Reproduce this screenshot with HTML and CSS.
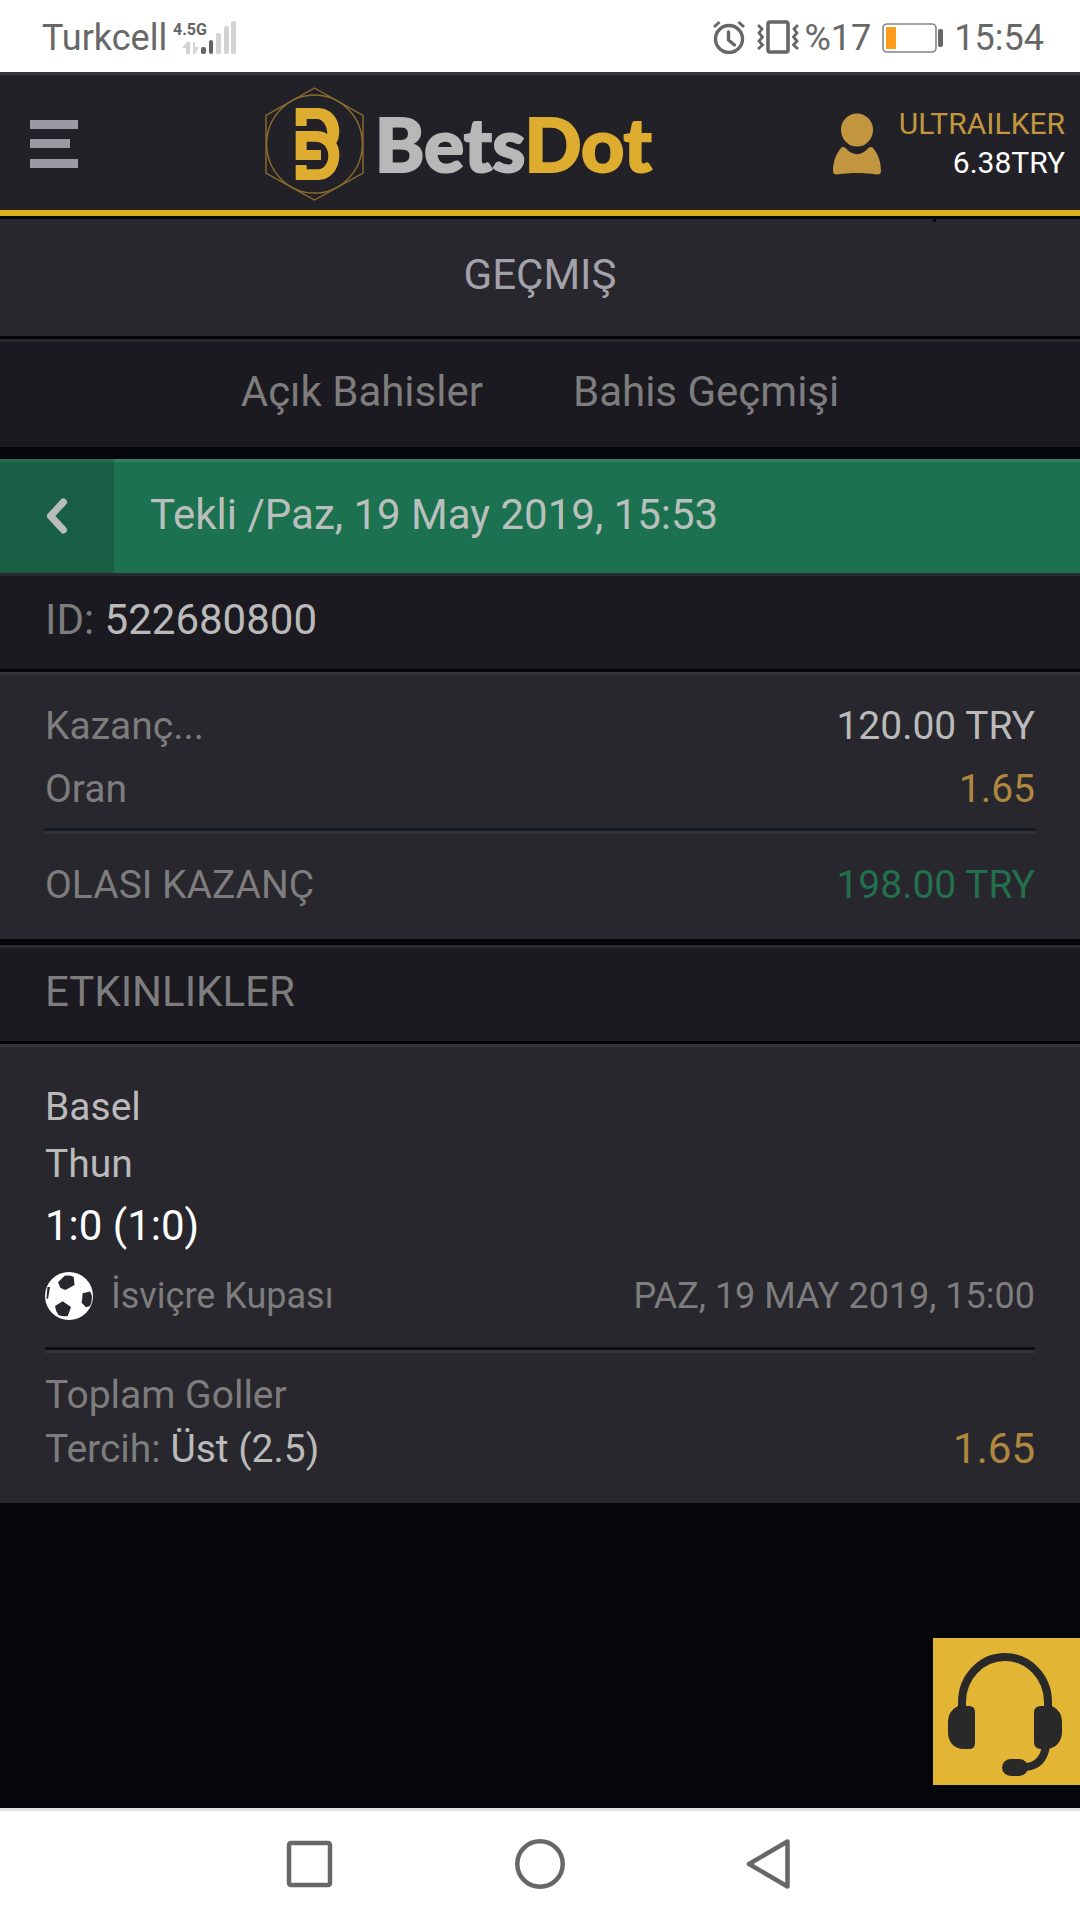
FILE: index.html
```html
<!DOCTYPE html>
<html lang="tr">
<head>
<meta charset="utf-8">
<meta name="viewport" content="width=device-width, initial-scale=1">
<title>BetsDot – Geçmiş</title>
<link rel="stylesheet" href="styles.css">
</head>
<body>
<div class="status">
  <span class="carrier">Turkcell</span>
  <svg class="signal" width="64" height="34" viewBox="0 0 64 34" aria-hidden="true">
    <text class="signal-text" x="0" y="15">4.5G</text>
    <g fill="#d3d3d3">
      <rect x="43" y="13" width="5" height="21" rx="2"/>
      <rect x="51" y="6" width="5" height="28" rx="2"/>
      <rect x="58" y="1" width="5" height="33" rx="2"/>
      <path d="M9 28L14 22H17V34H13V28ZM20 22H22V27H26L22 34H20Z"/>
    </g>
    <g fill="#646464">
      <rect x="28" y="27" width="5" height="7" rx="2"/>
      <rect x="36" y="20" width="4" height="14" rx="2"/>
    </g>
  </svg>
  <span class="spacer"></span>
  <svg class="alarm" width="34" height="34" viewBox="0 0 34 34" fill="none" stroke="#676767" aria-hidden="true">
    <circle cx="17" cy="19" r="13.5" stroke-width="3.4"/>
    <path d="M16.5 12V20L22.500 25" stroke-width="3.4" stroke-linecap="round" stroke-linejoin="round"/>
    <path d="M2 7L7.500 2M32 7L26.500 2" stroke-width="3"/>
  </svg>
  <svg class="vibrate" width="42" height="34" viewBox="0 0 42 34" fill="none" stroke="#676767" aria-hidden="true">
    <rect x="11" y="2" width="20" height="30" rx="2" stroke-width="3.6"/>
    <path d="M1 5L5 9L2 13L5.500 17L2 21L5.500 25L1 29M41 5L37 9L40 13L36.500 17L40 21L36.500 25L41 29" stroke-width="2.800"/>
  </svg>
  <span class="percent">%17</span>
  <svg class="battery" width="62" height="30" viewBox="0 0 62 30" aria-hidden="true">
    <rect x="1" y="1" width="53" height="28" rx="4" fill="none" stroke="#858585" stroke-width="1.600"/>
    <rect x="4" y="4" width="10" height="22" rx="1" fill="#ff9c1a"/>
    <rect x="56" y="6" width="5" height="18" rx="2" fill="#676767"/>
  </svg>
  <span class="time">15:54</span>
</div>

<header class="header">
  <button class="menu" type="button" aria-label="Menü">
    <svg width="48" height="48" viewBox="0 0 48 48" fill="#9b99a1"><path d="M0 0H48V9H0ZM0 19H40V28H0ZM0 39H48V48H0Z"/></svg>
  </button>
  <a class="logo" href="#" aria-label="BetsDot">
    <svg width="99" height="114" viewBox="0 0 99 114">
      <g fill="none" stroke="#8c6d2d" stroke-width="1.400">
        <path d="M49.500 1L98 28.500V86L49.500 113L1 86V28.500Z"/>
        <ellipse cx="49.500" cy="57" rx="47.800" ry="49"/>
      </g>
      <path fill="#deac2f" d="M30.700 21H53C66 21 74.300 32 74.300 44Q74.300 51 71.300 56.300Q74.300 61 74.300 68C74.300 82 66 93 53 93H30.700V78H41.700V82.300H53C59 82.300 63.300 76 63.300 69C63.300 60 58 54.700 50 54.700H41.700V63H56V73H30.700V44H53Q58 44 62.300 47C62.300 39 58 32 52 32H41.700V39H30.700Z"/>
    </svg>
    <span class="logo-text">Bets<span class="logo-accent">Dot</span></span>
  </a>
  <a class="user" href="#">
    <svg width="48" height="62" viewBox="0 0 48 62" fill="#c2963f" aria-hidden="true">
      <ellipse cx="24" cy="17" rx="16" ry="16.500"/>
      <path d="M8 35Q10 33 13 35.500C20 43 28 43 35 35.500Q38 33 40 35C46 42 48 51 48 58Q48 61.500 44 61.500C30 59.500 18 59.500 4 61.500Q0 61.500 0 58C0 51 2 42 8 35Z"/>
    </svg>
    <span class="account"><span class="name">ULTRAILKER</span><span class="balance">6.38TRY</span></span>
  </a>
</header>

<main class="main">
  <h1 class="title">GEÇMIŞ</h1>
  <nav class="tabs">
    <a href="#">Açık Bahisler</a>
    <a href="#">Bahis Geçmişi</a>
  </nav>
  <div class="slip">
    <button class="back" type="button" aria-label="Geri">
      <svg width="22" height="36" viewBox="0 0 22 36" fill="none" stroke="#b9bcba" stroke-width="7" stroke-linecap="round" stroke-linejoin="round"><path d="M17.500 4L4.500 18L17.500 32"/></svg>
    </button>
    <h2 class="slip-title">Tekli /Paz, 19 May 2019, 15:53</h2>
  </div>
  <div class="bar">ID:&nbsp;<span class="light">522680800</span></div>
  <section class="panel">
    <div class="row"><span>Kazanç...</span><span class="light">120.00 TRY</span></div>
    <div class="row"><span>Oran</span><span class="odds">1.65</span></div>
    <div class="row total"><span>OLASI KAZANÇ</span><span class="profit">198.00 TRY</span></div>
  </section>
  <h2 class="bar events">ETKINLIKLER</h2>
  <section class="panel event">
    <div class="team">Basel</div>
    <div class="team">Thun</div>
    <div class="score">1:0 (1:0)</div>
    <div class="league">
      <svg width="48" height="48" viewBox="0 0 48 48" aria-hidden="true">
        <circle cx="24" cy="24" r="24" fill="#fff"/>
        <path fill="#28272d" d="M13 10.300L19.700 3.700Q25 3 28.700 5L29.500 13L20.400 18L15.500 16ZM37.600 21.300L45.200 19.500L47 24Q47 30 45 34L41 35.300L36.600 30.700Q37.500 26 37.600 21.300ZM10 34L17.700 29.300L26 35L22.800 44Q18 45 13.500 43Q10.500 39 10 34ZM2.500 15H5L3 27L1.500 26Z"/>
      </svg>
      <span>İsviçre Kupası</span>
      <time class="date">PAZ, 19 MAY 2019, 15:00</time>
    </div>
    <div class="pick">
      <div>Toplam Goller</div>
      <div class="pick-row"><span>Tercih: <span class="light">Üst (2.5)</span></span><span class="pick-odds">1.65</span></div>
    </div>
  </section>
  <button class="support" type="button" aria-label="Canlı destek">
    <svg width="147" height="147" viewBox="0 0 147 147">
      <g fill="none" stroke="#2a2929" stroke-width="8">
        <path d="M29 72V64A43 45 0 0 1 115 64V72"/>
        <path d="M113 108Q110 128 92 129"/>
      </g>
      <path fill="#2a2929" d="M25 68H36Q42 68 42 74V105Q42 111 36 111H31C20 111 15 103 15 94V84Q15 73 25 68ZM107 68H119Q129 73 129 84V94C129 103 123 111 113 111H107Q101 110 101 104V74Q101 69 107 68Z"/>
      <rect x="69" y="121" width="26" height="17" rx="9" fill="#2a2929"/>
    </svg>
  </button>
</main>

<nav class="system">
  <button type="button" aria-label="Son uygulamalar"><svg width="50" height="50" viewBox="0 0 50 50"><rect x="4" y="4" width="41" height="42" rx="2"/></svg></button>
  <button type="button" aria-label="Ana ekran"><svg width="50" height="50" viewBox="0 0 50 50"><circle cx="25" cy="25" r="22.700"/></svg></button>
  <button type="button" aria-label="Geri git"><svg width="50" height="50" viewBox="0 0 50 50"><path d="M42.500 2.500V47.500L4 25Z"/></svg></button>
</nav>
</body>
</html>
```
FILE: styles.css
```css
* {
  box-sizing: border-box;
}

body {
  margin: 0;
  min-height: 100vh;
  display: flex;
  flex-direction: column;
  background: #050609;
  color: #7d7d7d;
  font-family: Roboto, "Liberation Sans", sans-serif;
  font-size: 39px;
}

h1,
h2 {
  margin: 0;
  font-weight: 400;
}

a {
  color: inherit;
  text-decoration: none;
}

button {
  border: 0;
  padding: 0;
  background: none;
  cursor: pointer;
}

svg {
  display: block;
  flex: none;
}

/* Phone status bar */
.status {
  display: flex;
  align-items: center;
  height: 72px;
  padding: 3px 36px 0 42px;
  background: #fff;
  color: #676767;
  font-size: 36px;
}

.signal {
  margin: 0 0 2px 6px;
  overflow: visible;
}

.signal-text {
  fill: #646464;
  font: bold 16px Roboto, sans-serif;
}

.spacer {
  flex: 1;
}

.alarm,
.vibrate {
  margin-bottom: 2px;
}

.vibrate {
  margin-left: 11px;
  margin-right: 6px;
}

.battery {
  margin: 0 10px 0 11px;
}

/* Site header */
.header {
  position: relative;
  z-index: 1;
  display: flex;
  align-items: center;
  justify-content: space-between;
  height: 147px;
  padding: 0 15px 4px 30px;
  background: #222127;
  border-top: 3px solid #33353f;
  border-bottom: 3px solid #050609;
  box-shadow: inset 0 -6px #dfac1c;
}

.header::after {
  content: "";
  position: absolute;
  right: 144px;
  bottom: -6px;
  width: 3px;
  height: 3px;
  background: #050609;
}

.menu {
  padding-right: 6px;
}

.logo {
  display: flex;
  align-items: center;
  gap: 11px;
}

.logo-text {
  padding-bottom: 2px;
  color: #b8b8b8;
  font-family: Lato, sans-serif;
  font-size: 75px;
  font-weight: 900;
  line-height: 90px;
  -webkit-text-stroke: 2px currentColor;
}

.logo-accent {
  color: #deac2f;
}

.user {
  display: flex;
  align-items: center;
  gap: 18px;
}

.account {
  display: flex;
  flex-direction: column;
  padding-bottom: 2px;
  text-align: right;
  font-size: 30px;
  line-height: 39px;
}

.name {
  color: #c2963f;
}

.balance {
  color: #fff;
}

/* Page content */
.main {
  position: relative;
  flex: 1;
}

.title {
  height: 117px;
  background: #28272d;
  color: #a3a1ab;
  font-size: 42px;
  line-height: 112px;
  text-align: center;
}

.tabs {
  display: flex;
  justify-content: center;
  gap: 90px;
  height: 108px;
  margin-top: 3px;
  background: #1b1a20;
  border-top: 3px solid #29282d;
  font-size: 42px;
  line-height: 100px;
}

.slip {
  display: flex;
  height: 114px;
  margin-top: 12px;
  background: #1c7150;
  box-shadow: inset 0 3px rgba(255, 255, 255, 0.1);
}

.back {
  display: flex;
  align-items: center;
  justify-content: center;
  width: 114px;
  background: rgba(15, 30, 30, 0.22);
}

.slip-title {
  padding-left: 36px;
  color: #b9c0bc;
  font-size: 42px;
  line-height: 112px;
}

.bar {
  display: flex;
  height: 96px;
  padding-left: 45px;
  background: #1b1a20;
  border-top: 3px solid #29282d;
  font-size: 42px;
  line-height: 88px;
}

.events {
  margin-top: 6px;
}

.panel {
  margin-top: 3px;
  padding: 20px 45px 22px;
  background: #28272d;
  border-top: 3px solid #343338;
}

.row {
  display: flex;
  justify-content: space-between;
  line-height: 63px;
}

.total {
  margin-top: 7px;
  padding-top: 23px;
  border-top: 3px solid #161922;
  box-shadow: inset 0 3px #343338;
}

.light {
  color: #bababa;
}

.odds,
.pick-odds {
  color: #b0873f;
}

.profit {
  color: #23704f;
}

.event {
  padding: 32px 45px 27px;
}

.team {
  color: #bababa;
  line-height: 57px;
}

.score {
  color: #fff;
  font-size: 42px;
  line-height: 66px;
}

.league {
  display: flex;
  align-items: center;
  gap: 18px;
  margin-top: 13px;
  font-size: 36px;
  line-height: 48px;
}

.date {
  margin-left: auto;
}

.pick {
  margin-top: 27px;
  padding-top: 18px;
  border-top: 3px solid #0f0e13;
  box-shadow: inset 0 3px #343338;
  line-height: 54px;
}

.pick-row {
  display: flex;
  justify-content: space-between;
}

.pick-odds {
  font-size: 42px;
}

.support {
  position: absolute;
  right: 0;
  bottom: 23px;
  background: #e2b535;
}

/* Phone navigation bar */
.system {
  display: flex;
  justify-content: center;
  height: 112px;
  padding-bottom: 3px;
  background: #fff;
  border-top: 3px solid #e0e0e0;
}

.system button {
  display: flex;
  align-items: center;
  justify-content: center;
  width: 230px;
}

.system svg {
  fill: none;
  stroke: #676767;
  stroke-width: 4.5px;
  stroke-linejoin: round;
}
```
